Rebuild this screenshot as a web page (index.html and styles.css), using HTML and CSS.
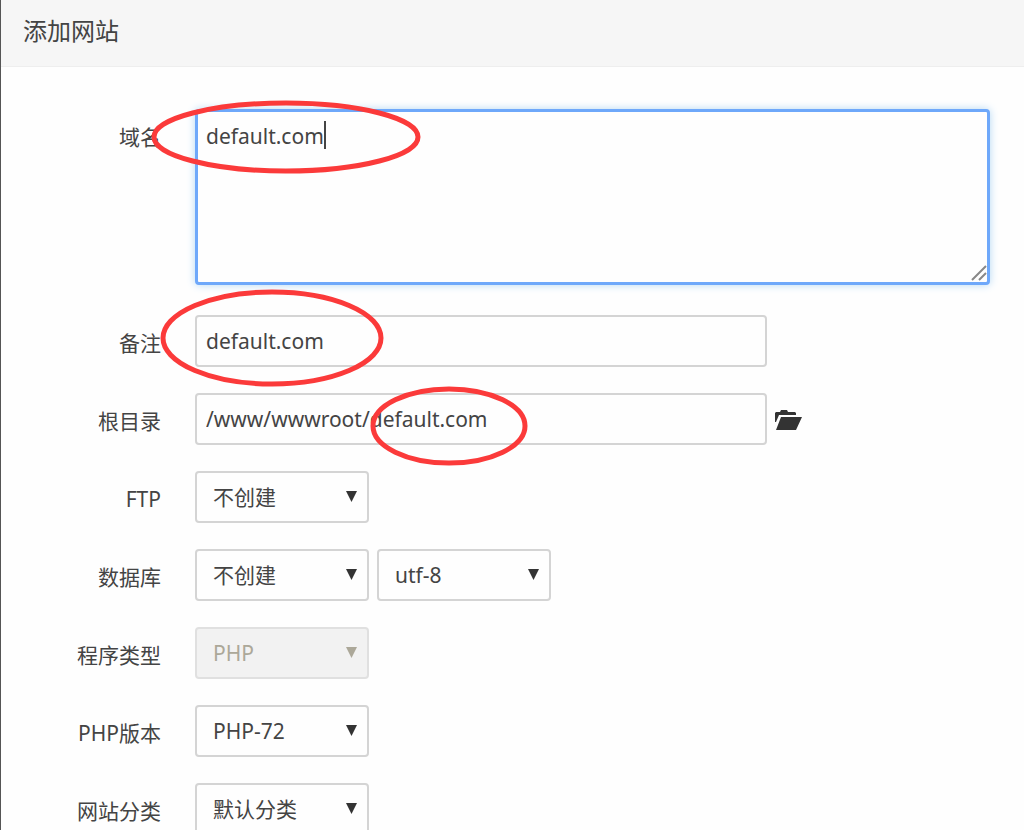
FILE: index.html
```html
<!DOCTYPE html>
<html lang="zh-CN">
<head>
<meta charset="utf-8">
<title>添加网站</title>
<link rel="stylesheet" href="styles.css">
</head>
<body>
<main class="dialog">
  <header class="dialog-header"><h1 class="dialog-title">添加网站</h1></header>
  <form class="form">
    <div class="row row-domain">
      <label class="label" for="domain">域名</label>
      <div class="area-wrap">
        <textarea class="area" id="domain">default.com</textarea>
        <span class="caret"></span>
        <svg class="grip" viewBox="0 0 16 16" aria-hidden="true"><path d="M1 15L15 1M8 15L15 8"/></svg>
      </div>
    </div>
    <div class="row">
      <label class="label" for="note">备注</label>
      <div class="controls"><input class="field" id="note" type="text" value="default.com"></div>
    </div>
    <div class="row">
      <label class="label" for="root">根目录</label>
      <div class="controls">
        <input class="field" id="root" type="text" value="/www/wwwroot/default.com">
        <button class="browse" type="button" aria-label="选择目录">
          <svg class="folder" viewBox="0 0 27 20" aria-hidden="true"><path d="M0 12V3L1 2H5L6 0H12L13 2H20L21 3V5H4L1 12ZM6 7H27L21 20H1Z"/></svg>
        </button>
      </div>
    </div>
    <div class="row">
      <label class="label" for="ftp">FTP</label>
      <div class="controls"><span class="pick"><select class="select" id="ftp"><option>不创建</option></select></span></div>
    </div>
    <div class="row">
      <label class="label" for="db">数据库</label>
      <div class="controls">
        <span class="pick"><select class="select" id="db"><option>不创建</option></select></span>
        <span class="pick"><select class="select" aria-label="编码"><option>utf-8</option></select></span>
      </div>
    </div>
    <div class="row">
      <label class="label" for="type">程序类型</label>
      <div class="controls"><span class="pick pick-off"><select class="select" id="type" disabled><option>PHP</option></select></span></div>
    </div>
    <div class="row">
      <label class="label" for="version">PHP版本</label>
      <div class="controls"><span class="pick"><select class="select" id="version"><option>PHP-72</option></select></span></div>
    </div>
    <div class="row">
      <label class="label" for="category">网站分类</label>
      <div class="controls"><span class="pick"><select class="select" id="category"><option>默认分类</option></select></span></div>
    </div>
  </form>
  <svg class="marks" width="600" height="500" aria-hidden="true">
    <ellipse cx="285" cy="137" rx="132" ry="34"/>
    <ellipse cx="271" cy="338" rx="109" ry="46"/>
    <ellipse cx="448" cy="426" rx="76" ry="37"/>
  </svg>
</main>
</body>
</html>
```
FILE: styles.css
```css
* { box-sizing: border-box; }
body {
  margin: 0;
  background: #fefefe;
  color: #444;
  font-family: "Noto Sans", "Noto Sans CJK SC", sans-serif;
  font-size: 21px;
}
.dialog {
  position: relative;
  height: 100vh;
  overflow: hidden;
  border-left: 1px solid #555;
}
.dialog-header {
  padding: 13px 22px 17px;
  background: #f6f6f6;
  border-bottom: 1px solid #eee;
}
.dialog-title {
  margin: 0;
  font-size: 24px;
  line-height: 36px;
  font-weight: 400;
}
.form {
  display: flex;
  flex-direction: column;
  gap: 22px;
  padding: 42px 34px 42px 0;
}
.row {
  display: grid;
  grid-template-columns: 160px 1fr;
  column-gap: 34px;
  align-items: start;
}
.row-domain { margin-bottom: 8px; }
.label { text-align: right; line-height: 56px; }
.controls { display: flex; align-items: center; gap: 8px; height: 52px; }
.area-wrap { position: relative; }
.area, .field, .select {
  margin: 0;
  color: #444;
  font: inherit;
  background: #fefefe;
  border: 2px solid #d4d4d4;
  border-radius: 4px;
  outline: none;
}
.area {
  display: block;
  width: 100%;
  height: 176px;
  padding: 9px 8px;
  line-height: 30px;
  border: 3px solid #6ea8fa;
  box-shadow: 0 0 8px #b5d9f5;
  resize: none;
}
.caret {
  position: absolute;
  top: 12px;
  left: 129px;
  width: 2px;
  height: 28px;
  background: #444;
}
.grip {
  position: absolute;
  right: 3px;
  bottom: 4px;
  width: 16px;
  height: 16px;
  fill: none;
  stroke: #888;
  stroke-width: 2;
}
.field { flex: 0 1 572px; min-width: 0; height: 52px; padding: 0 9px; }
.browse { display: flex; padding: 2px 0 0; border: 0; background: none; }
.folder { width: 27px; height: 20px; fill: #333; }
.pick { position: relative; color: #333; }
.pick::after {
  content: "";
  position: absolute;
  top: 20px;
  right: 12px;
  width: 11px;
  height: 11px;
  background: currentColor;
  clip-path: polygon(0 0, 100% 0, 50% 100%);
  pointer-events: none;
}
.select {
  display: block;
  width: 174px;
  height: 52px;
  padding: 0 16px;
  appearance: none;
}
.pick-off { color: #aca899; }
.select:disabled {
  color: #aca899;
  background: #f2f2f2;
  border-color: #e0e0e0;
  opacity: 1;
}
.marks {
  position: absolute;
  top: 0;
  left: 0;
  fill: none;
  stroke: #fb3a3a;
  stroke-width: 5;
  pointer-events: none;
}
```
